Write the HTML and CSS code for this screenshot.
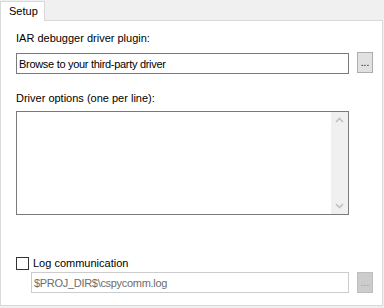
FILE: index.html
```html
<!DOCTYPE html>
<html lang="en">
<head>
  <meta charset="UTF-8" />
  <title>Setup</title>
  <link rel="stylesheet" href="styles.css">
</head>
<body>
  <div class="tabs">
    <div class="tab">Setup</div>
  </div>
  <div class="panel">
    <label class="caption">IAR debugger driver plugin:</label>
    <div class="row">
      <input class="field" type="text" value="Browse to your third-party driver" />
      <button class="browse">...</button>
    </div>

    <label class="caption second">Driver options (one per line):</label>
    <div class="textbox">
      <div class="scrollbar">
        <svg width="17" height="17" viewBox="0 0 17 17"><path d="M5 10 L8.5 6.5 L12 10" fill="none" stroke="#c0c0c0" stroke-width="1.6"/></svg>
        <svg width="17" height="17" viewBox="0 0 17 17"><path d="M5 7 L8.5 10.5 L12 7" fill="none" stroke="#c0c0c0" stroke-width="1.6"/></svg>
      </div>
    </div>

    <div class="check-line">
      <span class="checkbox"></span>
      <span>Log communication</span>
    </div>
    <div class="row indent">
      <input class="field disabled" type="text" value="$PROJ_DIR$\cspycomm.log" disabled />
      <button class="browse disabled" disabled>...</button>
    </div>
  </div>
</body>
</html>
```

FILE: styles.css
```css
*, *::before, *::after { box-sizing: border-box; }
body {
  margin: 0;
  width: 384px;
  height: 308px;
  background: #f0f0f0;
  font-family: "Liberation Sans", Arial, sans-serif;
  font-size: 11px;
  line-height: 13px;
  color: #000;
}
.tabs {
  display: flex;
  height: 20px;
  padding-top: 1px;
}
.tab {
  width: 45px;
  height: 20px;
  background: #fff;
  border: 1px solid #d9d9d9;
  border-bottom: none;
  padding: 3px 0 0 8px;
  position: relative;
  z-index: 1;
}
.panel {
  width: 383px;
  height: 286px;
  background: #fff;
  border: 1px solid #d9d9d9;
  padding: 11px 0 0 15px;
}
.caption {
  display: block;
  height: 21px;
}
.caption.second {
  margin-top: 18px;
  height: 19px;
}
.row {
  display: flex;
  align-items: flex-start;
  gap: 8px;
}
.field {
  width: 333px;
  height: 21px;
  border: 1px solid #7a7a7a;
  padding: 0 2px;
  font: inherit;
  letter-spacing: -0.3px;
  color: #000;
  background: #fff;
  outline: none;
}
.browse {
  width: 16px;
  height: 21px;
  margin-top: -1px;
  padding: 0;
  border: 1px solid #adadad;
  background: #e1e1e1;
  font: inherit;
  font-size: 10px;
  line-height: 20px;
  color: #000;
}
.textbox {
  width: 333px;
  height: 104px;
  border: 1px solid #7a7a7a;
  display: flex;
  justify-content: flex-end;
}
.scrollbar {
  width: 17px;
  height: 100%;
  background: #f0f0f0;
  display: flex;
  flex-direction: column;
  justify-content: space-between;
}
.scrollbar svg { display: block; }
.check-line {
  display: flex;
  align-items: center;
  gap: 4px;
  margin-top: 42px;
  height: 13px;
}
.checkbox {
  width: 13px;
  height: 13px;
  border: 1px solid #333;
  background: #fff;
}
.indent {
  margin-top: 2px;
  padding-left: 15px;
}
.field.disabled {
  width: 318px;
  border-color: #cccccc;
  color: #6d6d6d;
  background: #fff;
}
.browse.disabled {
  margin-top: 0;
  height: 21px;
  border-color: #bfbfbf;
  background: #cccccc;
  color: #9a9a9a;
}
```
